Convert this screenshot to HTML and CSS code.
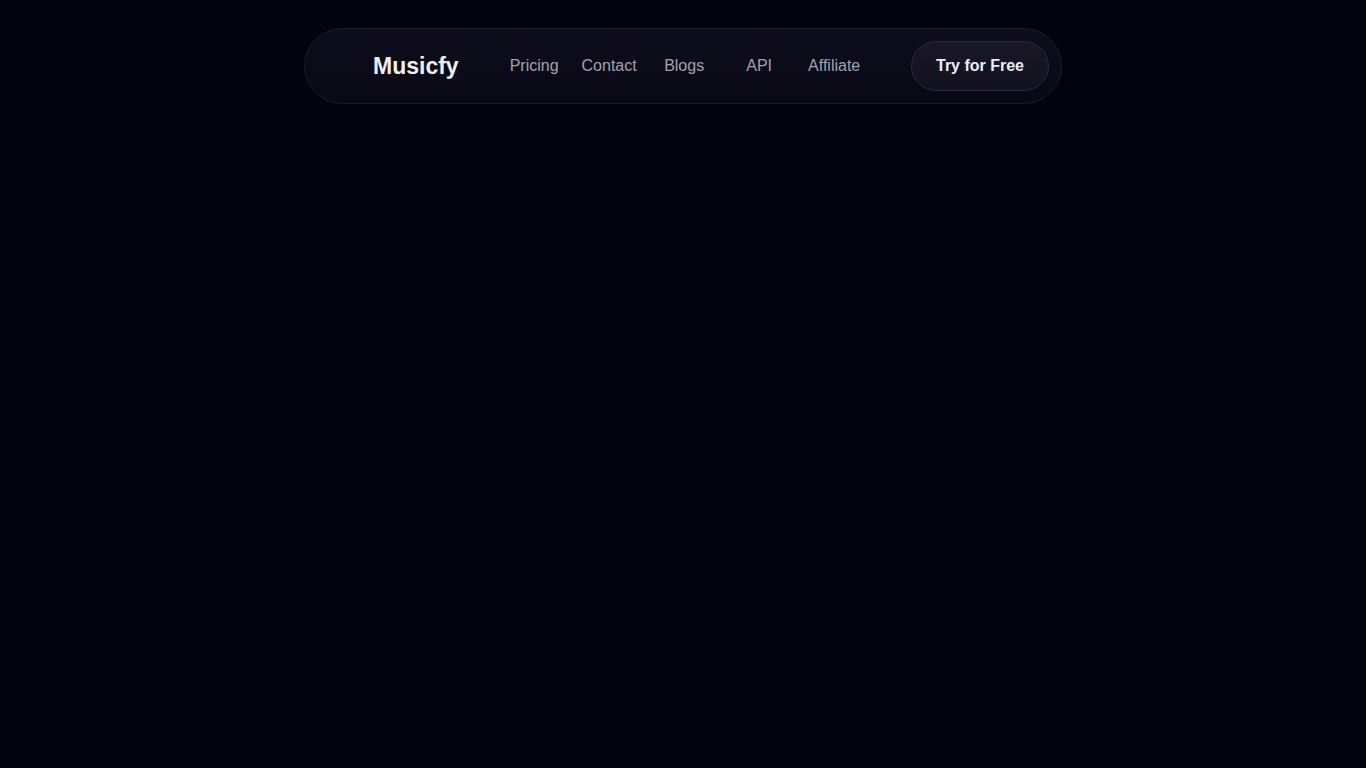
FILE: index.html
```html
<!DOCTYPE html>
<html lang="en">
<head>
    <meta charset="UTF-8">
    <meta name="viewport" content="width=device-width, initial-scale=1.0">
    <title>Musicfy</title>
    <link rel="stylesheet" href="styles.css">
</head>
<body>
<header class="top">
    <nav class="nav">
        <a class="logo" href="#">Musicfy</a>
        <ul class="links">
            <li><a href="#">Pricing</a></li>
            <li><a href="#">Contact</a></li>
            <li><a href="#">Blogs</a></li>
            <li><a href="#">API</a></li>
            <li><a href="#">Affiliate</a></li>
        </ul>
        <a class="try-btn" href="#">Try for Free</a>
    </nav>
</header>
</body>
</html>
```

FILE: styles.css
```css
/* Page */
html, body {
    margin: 0;
    height: 100%;
}
body {
    background-color: #03030f;
    font-family: "Liberation Sans", Arial, sans-serif;
}
a {
    text-decoration: none;
}
/* Header bar */
.top {
    display: flex;
    justify-content: center;
    padding-top: 28px;
}
.nav {
    box-sizing: border-box;
    width: 758px;
    height: 76px;
    display: flex;
    align-items: center;
    padding: 0 12px 0 68px;
    border: 1px solid #1b1b2a;
    border-radius: 38px;
    background: linear-gradient(180deg, #0d0d1b 0%, #090916 100%);
}
.logo {
    color: #f0f0f4;
    font-size: 23px;
    font-weight: bold;
    margin-right: 38px;
}
.links {
    display: flex;
    list-style: none;
    margin: 0;
    padding: 0;
}
.links li {
    width: 75px;
    text-align: center;
}
.links a {
    color: #a2a2ac;
    font-size: 16px;
}
/* Call to action */
.try-btn {
    margin-left: auto;
    width: 138px;
    height: 50px;
    box-sizing: border-box;
    display: flex;
    align-items: center;
    justify-content: center;
    border: 1px solid #2a2a3b;
    border-radius: 25px;
    background: linear-gradient(180deg, #181827 0%, #111120 100%);
    color: #ececf2;
    font-size: 16px;
    font-weight: bold;
}
```
